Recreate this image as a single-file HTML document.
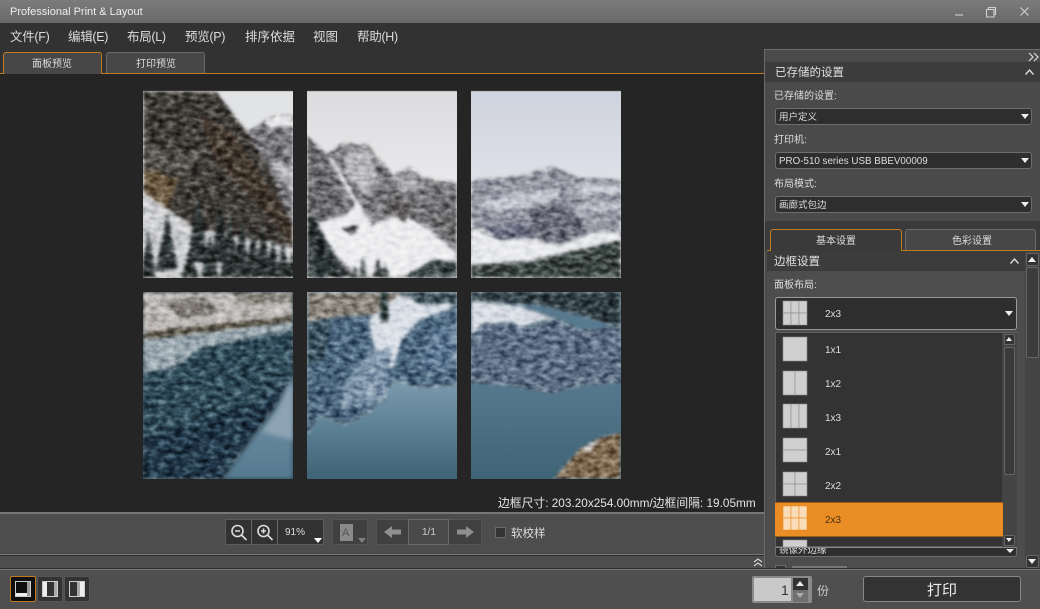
<!DOCTYPE html>
<html><head><meta charset="utf-8">
<style>
html,body{margin:0;padding:0;background:#333}
#r{position:relative;width:1040px;height:609px;overflow:hidden;background:#333;font-family:"Liberation Sans","Noto Sans CJK SC",sans-serif;color:#ddd}
#r div,#r span,#r svg{position:absolute;box-sizing:border-box}
.t{white-space:nowrap;line-height:16px;height:16px}
.m{font-size:12.500px;letter-spacing:-.3px;top:29px}
.cb{background:#2e2e2e;border:1px solid #6e6e6e;border-radius:3px}
.tri{width:0;height:0;border-left:4px solid transparent;border-right:4px solid transparent;border-top:5px solid #eee}
</style></head><body>
<div id="r">
<!-- title bar -->
<div style="left:0;top:0;width:1040px;height:23px;background:linear-gradient(#7b7b7b,#696969)"></div>
<span class="t" style="left:10px;top:4px;font-size:11px;color:#eee">Professional Print &amp; Layout</span>
<svg style="left:950px;top:4px" width="85" height="16" fill="none" stroke="#d0d0d0" stroke-width="1.100"><path d="M5 11h8"/><path d="M36.500 5.500h7.500v7.500h-7.500zM38.500 5.500v-2h7v7h-2"/><path d="M70.500 3.500l8 8M78.500 3.500l-8 8"/></svg>
<!-- menu -->
<div style="left:0;top:23px;width:1040px;height:51px;background:#323232"></div>
<span class="t m" style="left:10px">文件(F)</span>
<span class="t m" style="left:68px">编辑(E)</span>
<span class="t m" style="left:127px">布局(L)</span>
<span class="t m" style="left:185px">预览(P)</span>
<span class="t m" style="left:245px;letter-spacing:0">排序依据</span>
<span class="t m" style="left:313px;letter-spacing:0">视图</span>
<span class="t m" style="left:357px">帮助(H)</span>
<!-- tabs -->
<div style="left:0;top:73px;width:765px;height:1px;background:#c07a20"></div>
<div style="left:3px;top:52px;width:99px;height:22px;background:#474747;border:1px solid #c07a20;border-bottom:none;border-radius:3px 3px 0 0"></div>
<div style="left:106px;top:52px;width:99px;height:21px;background:#474747;border:1px solid #6a6a6a;border-bottom:none;border-radius:3px 3px 0 0"></div>
<span class="t" style="left:32px;top:57px;font-size:10px">面板预览</span>
<span class="t" style="left:136px;top:57px;font-size:10px">打印预览</span>
<!-- canvas -->
<div style="left:0;top:74px;width:764px;height:438px;background:#252525"></div>
<svg style="left:0;top:0" width="1040" height="609" viewBox="0 0 1040 609">
<defs>
<clipPath id="c1"><rect x="143" y="91" width="150" height="187"/></clipPath>
<clipPath id="c2"><rect x="307" y="91" width="150" height="187"/></clipPath>
<clipPath id="c3"><rect x="471" y="91" width="150" height="187"/></clipPath>
<clipPath id="c4"><rect x="143" y="292" width="150" height="187"/></clipPath>
<clipPath id="c5"><rect x="307" y="292" width="150" height="187"/></clipPath>
<clipPath id="c6"><rect x="471" y="292" width="150" height="187"/></clipPath>
<filter id="b" filterUnits="userSpaceOnUse" x="140" y="88" width="484" height="394"><feGaussianBlur stdDeviation="2.500"/></filter>
<filter id="tx" filterUnits="userSpaceOnUse" x="140" y="88" width="484" height="394" color-interpolation-filters="sRGB">
<feGaussianBlur in="SourceGraphic" stdDeviation="1.500" result="s"/>
<feTurbulence type="fractalNoise" baseFrequency=".12 .22" numOctaves="3" seed="3" result="t"/>
<feColorMatrix in="t" type="matrix" values="1.500 0 0 0 -.25  1.500 0 0 0 -.25  1.500 0 0 0 -.25  0 0 0 0 1" result="n"/>
<feBlend in="n" in2="s" mode="soft-light" result="bl"/>
<feComposite in="bl" in2="s" operator="in" result="c"/>
<feGaussianBlur in="c" stdDeviation=".4"/>
</filter>
<linearGradient id="sk2" x1="0" y1="0" x2="0" y2="1"><stop offset="0" stop-color="#dcdcde"/><stop offset=".5" stop-color="#e9e9eb"/></linearGradient>
<linearGradient id="sk3" x1="0" y1="0" x2="0" y2="1"><stop offset="0" stop-color="#cfd3df"/><stop offset=".5" stop-color="#dfe1e8"/></linearGradient>
<linearGradient id="w5" x1="0" y1="0" x2="0" y2="1"><stop offset=".4" stop-color="#86a2b6"/><stop offset=".7" stop-color="#5f8397"/><stop offset="1" stop-color="#3e6374"/></linearGradient>
<linearGradient id="w6" x1="0" y1="0" x2="0" y2="1"><stop offset=".45" stop-color="#587a90"/><stop offset="1" stop-color="#3e6476"/></linearGradient>
<linearGradient id="w4" x1="0" y1="0" x2="0" y2="1"><stop offset="0" stop-color="#7795aa"/><stop offset="1" stop-color="#557a8f"/></linearGradient>
</defs>
<!-- panel 1 -->
<g clip-path="url(#c1)">
<rect x="143" y="91" width="150" height="187" fill="#e2e3e5"/>
<g filter="url(#tx)">
<polygon points="143,91 216,91 247,132 293,195 293,250 143,250" fill="#3f3b36"/>
<polygon points="247,132 263,123 277,115 293,116 293,230 270,170" fill="#76757a"/>
<polygon points="263,122 277,115 293,116 293,126 272,128" fill="#e8e8ea"/>
<polygon points="268,160 293,165 293,195" fill="#bfbfc3"/>
<polygon points="200,115 232,132 293,225 293,247 262,208 215,160" fill="#44392f"/>
<polygon points="143,165 178,180 165,215 143,200" fill="#6b5a42"/>
<polygon points="143,140 175,155 205,150 190,172 143,170" fill="#55524d"/>
<polygon points="143,192 195,228 293,247 293,278 143,278" fill="#cfd0d2"/>
<path d="M198 193L209 262H187ZM148 230L156 278H140ZM167 213L178 270H156ZM220 203L229 262H211ZM230 210L240 278H220ZM242 220L251 278H233ZM253 223L261 278H245ZM263 220L271 278H255ZM273 237L281 278H265ZM283 243L291 278H275ZM210 235L219 278H201ZM190 250L199 278H181ZM293 250L300 278H286Z" fill="#2b3332"/>
</g></g>
<!-- panel 2 -->
<g clip-path="url(#c2)">
<rect x="307" y="91" width="150" height="187" fill="url(#sk2)"/>
<g filter="url(#tx)">
<polygon points="307,135 327,155 343,143 367,145 380,160 393,175 410,167 423,178 457,183 457,262 433,260 403,278 307,278" fill="#7a797c"/>
<polygon points="345,150 370,150 378,178 368,195 345,175" fill="#b9b9bc"/>
<polygon points="395,178 412,172 425,184 415,192 400,192" fill="#a8a8ac"/>
<polygon points="307,135 327,155 345,205 330,225 317,223 307,213" fill="#6a696c"/>
<polygon points="327,155 334,160 372,225 400,213 430,230 457,253 457,262 433,260 403,277 360,277 335,255 317,223 345,215 355,205" fill="#ededef"/>
<polygon points="342,228 360,225 352,235" fill="#4e4e52"/>
<polygon points="392,192 412,205 405,222 388,212" fill="#5d5a5a"/>
<polygon points="420,200 457,205 457,246 432,226" fill="#6c6b6d"/>
<polygon points="307,213 317,223 335,255 350,278 307,278" fill="#2f3838"/>
<polygon points="403,278 433,260 457,262 457,278" fill="#3a4646"/>
<path d="M363 255L367 278H359ZM378 258L383 278H373ZM385 262L389 278H381ZM355 264L358 278H352Z" fill="#384040"/>
</g></g>
<!-- panel 3 -->
<g clip-path="url(#c3)">
<rect x="471" y="91" width="150" height="187" fill="url(#sk3)"/>
<g filter="url(#tx)">
<polygon points="471,180 513,177 553,167 580,178 621,180 621,232 593,232 560,245 530,238 471,227" fill="#9496a2"/>
<polygon points="475,205 520,192 560,188 560,198 500,212" fill="#c3c6cf"/>
<polygon points="575,185 621,186 621,193 578,195" fill="#ccced6"/>
<polygon points="578,205 621,202 621,210 582,214" fill="#bcbec8"/>
<polygon points="480,228 530,222 540,240 500,240" fill="#6b6f82"/>
<polygon points="530,208 568,206 592,238 560,245 530,238" fill="#6a6c79"/>
<polygon points="471,227 500,240 530,238 560,245 593,232 621,232 621,240 527,262 471,265" fill="#e9eaed"/>
<polygon points="471,265 527,262 621,240 621,278 471,278" fill="#39433f"/>
</g></g>
<!-- panel 4 -->
<g clip-path="url(#c4)">
<rect x="143" y="292" width="150" height="187" fill="#29414f"/>
<g filter="url(#tx)">
<polygon points="143,292 293,292 293,318 143,335" fill="#bdbab7"/>
<polygon points="165,300 205,298 220,312 180,318" fill="#7b7670"/>
<polygon points="230,292 293,292 293,302 245,305" fill="#8b8880"/>
<polygon points="143,332 293,316 293,322 143,340" fill="#5a5448"/>
<polygon points="143,340 293,322 293,330 240,340 200,348 175,368 143,372" fill="#9eabb3"/>
<polygon points="175,368 200,348 293,330 293,378 255,430 223,479 143,479 143,372" fill="#2f4b59"/>
<polygon points="200,420 255,405 293,378 253,438 223,479 143,479 143,440" fill="#21384a"/>
</g>
<polygon points="293,378 293,479 223,479 253,438 275,410" fill="url(#w4)" filter="url(#b)"/>
<polygon points="293,378 293,440 262,432 278,410" fill="#8ea3b3" filter="url(#b)"/>
</g>
<!-- panel 5 -->
<g clip-path="url(#c5)">
<rect x="307" y="292" width="150" height="187" fill="url(#w5)"/>
<g filter="url(#tx)">
<polygon points="307,292 400,292 413,306 390,314 345,316 307,322" fill="#8b857c"/>
<polygon points="307,322 345,316 390,316 420,318 457,305 457,385 420,388 395,380 370,412 345,425 320,415 307,435" fill="#4a667e"/>
<polygon points="307,322 330,320 325,360 307,365" fill="#3d5663"/>
<polygon points="368,320 398,296 440,298 457,306 420,320 402,340 392,370 375,350" fill="#d9dfe6"/>
<polygon points="400,292 457,292 457,303 420,304" fill="#3b4c57"/>
<polygon points="345,385 370,350 392,350 385,400 340,410" fill="#8298ad"/>
<polygon points="430,330 457,320 457,372 420,372" fill="#5e7993"/>
<polygon points="380,292 388,292 388,322 380,322" fill="#2c3a3a"/>
</g></g>
<!-- panel 6 -->
<g clip-path="url(#c6)">
<rect x="471" y="292" width="150" height="187" fill="url(#w6)"/>
<g filter="url(#tx)">
<polygon points="471,292 621,292 621,328 580,315 540,305 471,300" fill="#2f3d43"/>
<polygon points="471,300 520,306 555,318 545,320 520,328 505,322 480,325 471,340" fill="#d8dde4"/>
<polygon points="471,335 485,325 505,322 530,328 555,318 580,330 621,328 621,382 580,385 550,393 510,385 471,382" fill="#5c6e85"/>
<polygon points="553,479 580,448 599,438 621,432 621,479" fill="#7f6a50"/>
<polygon points="580,448 600,440 590,452" fill="#d5d5d5"/>
</g></g>
<g fill="none" stroke="#6e6e6e" stroke-width="1" opacity=".5"><path d="M143 91h150M307 91h150M471 91h150"/></g>
</svg>
<span class="t" style="left:498px;top:495px;font-size:11.800px;color:#e4e4e4">边框尺寸: 203.20x254.00mm/边框间隔: 19.05mm</span>
<!-- toolbar -->
<div style="left:0;top:512px;width:764px;height:42px;background:#4d4d4d;border-top:2px solid #777"></div>
<div style="left:0;top:554px;width:764px;height:2px;background:linear-gradient(#777 50%,#2e2e2e 50%)"></div>
<div style="left:0;top:556px;width:764px;height:12px;background:#4d4d4d"></div>
<div style="left:0;top:568px;width:1040px;height:2px;background:linear-gradient(#2e2e2e 50%,#7a7a7a 50%)"></div>
<div style="left:0;top:570px;width:1040px;height:39px;background:#4f4f4f"></div>
<svg style="left:752px;top:556px" width="12" height="12" fill="none" stroke="#ddd" stroke-width="1.100"><path d="M2 6l4-3 4 3M2 10l4-3 4 3"/></svg>
<!-- zoom group -->
<div style="left:225px;top:519px;width:99px;height:26px;background:#323232;border:1px solid #5c5c5c;border-radius:2px"></div>
<div style="left:251px;top:519px;width:1px;height:26px;background:#666"></div>
<div style="left:277px;top:519px;width:1px;height:26px;background:#666"></div>
<svg style="left:225px;top:519px" width="52" height="26" fill="none" stroke="#ddd" stroke-width="1.600"><circle cx="12.500" cy="12" r="5.500"/><path d="M16.500 16l5 5M10 12h5"/><circle cx="38.500" cy="12" r="5.500"/><path d="M42.500 16l5 5M36 12h5M38.500 9.500v5"/></svg>
<span class="t" style="left:285px;top:525px;font-size:10px">91%</span>
<div class="tri" style="left:314px;top:538px;border-top-color:#fff"></div>
<div style="left:332px;top:519px;width:36px;height:26px;background:#404040;border:1px solid #555;border-radius:2px"></div>
<div style="left:340px;top:524px;width:13px;height:17px;background:#8a8a8a"></div>
<span class="t" style="left:342px;top:525px;font-size:11px;color:#555">A</span>
<div class="tri" style="left:358px;top:538px;border-top-color:#7e7e7e"></div>
<div style="left:376px;top:519px;width:106px;height:26px;background:#404040;border:1px solid #555;border-radius:2px"></div>
<div style="left:408px;top:519px;width:41px;height:26px;background:#4a4a4a;border:1px solid #6a6a6a"></div>
<span class="t" style="left:422px;top:525px;font-size:10px;color:#ccc">1/1</span>
<svg style="left:384px;top:524px" width="90" height="16" fill="#8f8f8f"><path d="M0 8l8-6v3.500h9v5H8V14zM90 8l-8-6v3.500h-9v5h9V14z"/></svg>
<div style="left:495px;top:527px;width:11px;height:11px;background:#333;border:1px solid #6a6a6a"></div>
<span class="t" style="left:511px;top:526px;font-size:11.500px;color:#ddd">软校样</span>
<!-- bottom-left -->
<div style="left:10px;top:576px;width:26px;height:26px;background:#0f0f0f;border:1px solid #c07a20;border-radius:2px"></div>
<div style="left:37px;top:576px;width:26px;height:26px;background:#333;border:1px solid #555;border-radius:2px"></div>
<div style="left:64px;top:576px;width:26px;height:26px;background:#333;border:1px solid #555;border-radius:2px"></div>
<svg style="left:10px;top:576px" width="80" height="26" fill="none"><rect x="5.500" y="5.500" width="15" height="15" stroke="#ccc"/><rect x="6" y="17" width="11" height="3" fill="#eee"/><rect x="17" y="6" width="3" height="14" fill="#999"/><rect x="32.500" y="5.500" width="15" height="15" stroke="#ccc"/><rect x="33" y="6" width="4" height="14" fill="#eee"/><rect x="44" y="6" width="3" height="14" fill="#aaa"/><rect x="59.500" y="5.500" width="15" height="15" stroke="#ccc"/><rect x="70" y="6" width="4" height="14" fill="#eee"/><rect x="67" y="6" width="3" height="14" fill="#aaa"/></svg>
<!-- copies / print -->
<div style="left:752px;top:576px;width:60px;height:27px;background:#8a8a8a;border-radius:2px"></div>
<div style="left:754px;top:578px;width:37px;height:23px;background:#c9c9c9"></div>
<span class="t" style="left:781px;top:582px;font-size:14px;color:#333">1</span>
<div style="left:793px;top:578px;width:15px;height:12px;background:#333"></div>
<div style="left:793px;top:590px;width:15px;height:12px;background:#707070"></div>
<div class="tri" style="left:796px;top:581px;border-top:none;border-bottom:5px solid #eee"></div>
<div class="tri" style="left:796px;top:593px;border-top-color:#aaa"></div>
<span class="t" style="left:817px;top:583px;font-size:12px;color:#ccc">份</span>
<div style="left:863px;top:576px;width:158px;height:26px;background:#333;border:1px solid #888;border-radius:3px"></div>
<span class="t" style="left:927px;top:583px;font-size:15px;color:#eee">打印</span>
<!-- right panel -->
<div style="left:764px;top:49px;width:276px;height:519px;background:#4a4a4a;border:1px solid #6c6c6c;border-right:none;border-bottom:none"></div>
<svg style="left:1027px;top:51px" width="13" height="12" fill="none" stroke="#ddd" stroke-width="1.200"><path d="M2 2l4 4-4 4M7 2l4 4-4 4"/></svg>
<div style="left:765px;top:62px;width:275px;height:20px;background:#3c3c3c"></div>
<span class="t" style="left:775px;top:65px;font-size:11.500px;color:#e0e0e0">已存储的设置</span>
<svg style="left:1024px;top:68px" width="11" height="8" fill="none" stroke="#ddd" stroke-width="1.400"><path d="M1.500 6.500L5.500 2l4 4.500"/></svg>
<span class="t" style="left:774px;top:89px;font-size:10px">已存储的设置:</span>
<div class="cb" style="left:775px;top:108px;width:257px;height:17px"></div>
<span class="t" style="left:779px;top:110px;font-size:9.500px">用户定义</span>
<div class="tri" style="left:1021px;top:114px"></div>
<span class="t" style="left:774px;top:133px;font-size:10px">打印机:</span>
<div class="cb" style="left:775px;top:152px;width:257px;height:17px"></div>
<span class="t" style="left:779px;top:154px;font-size:9.800px">PRO-510 series USB BBEV00009</span>
<div class="tri" style="left:1021px;top:158px"></div>
<span class="t" style="left:774px;top:177px;font-size:10px">布局模式:</span>
<div class="cb" style="left:775px;top:196px;width:257px;height:17px"></div>
<span class="t" style="left:779px;top:198px;font-size:9.500px">画廊式包边</span>
<div class="tri" style="left:1021px;top:202px"></div>
<div style="left:765px;top:221px;width:275px;height:30px;background:#3a3a3a"></div>
<div style="left:767px;top:250px;width:273px;height:1px;background:#c07a20"></div>
<div style="left:770px;top:229px;width:132px;height:22px;background:#3a3a3a;border:1px solid #c07a20;border-bottom:none;border-radius:3px 3px 0 0"></div>
<div style="left:905px;top:229px;width:131px;height:21px;background:#474747;border:1px solid #6a6a6a;border-bottom:none;border-radius:3px 3px 0 0"></div>
<span class="t" style="left:816px;top:234px;font-size:10px">基本设置</span>
<span class="t" style="left:952px;top:234px;font-size:10px">色彩设置</span>
<div style="left:767px;top:251px;width:258px;height:20px;background:#3c3c3c"></div>
<div style="left:767px;top:271px;width:258px;height:297px;background:#4d4d4d"></div>
<div style="left:1025px;top:251px;width:15px;height:317px;background:#444"></div>
<span class="t" style="left:774px;top:254px;font-size:11.500px;color:#e0e0e0">边框设置</span>
<svg style="left:1009px;top:257px" width="11" height="8" fill="none" stroke="#ddd" stroke-width="1.400"><path d="M1.500 6.500L5.500 2l4 4.500"/></svg>
<span class="t" style="left:774px;top:278px;font-size:10px">面板布局:</span>
<div style="left:1026px;top:253px;width:13px;height:13px;background:#333;border:1px solid #666;border-radius:2px"></div>
<div class="tri" style="left:1028px;top:257px;border-top:none;border-bottom:5px solid #eee"></div>
<div style="left:1026px;top:267px;width:13px;height:91px;background:#3c3c3c;border:1px solid #666;border-radius:2px"></div>
<div style="left:1026px;top:555px;width:13px;height:13px;background:#333;border:1px solid #666;border-radius:2px"></div>
<div class="tri" style="left:1028px;top:559px"></div>
<!-- combobox -->
<div style="left:775px;top:297px;width:242px;height:33px;background:#2e2e2e;border:1px solid #9a9a9a;border-radius:3px"></div>
<span class="t" style="left:825px;top:307px;font-size:10px">2x3</span>
<div class="tri" style="left:1005px;top:311px"></div>
<!-- dropdown -->
<div style="left:775px;top:332px;width:242px;height:215px;background:#333;border:1px solid #5e5e5e"></div>
<div style="left:1002px;top:333px;width:15px;height:214px;background:#444"></div>
<div style="left:1004px;top:334px;width:11px;height:11px;background:#333;border:1px solid #666"></div>
<div class="tri" style="left:1006px;top:337px;border-left-width:3.500px;border-right-width:3.500px;border-top:none;border-bottom:4px solid #eee"></div>
<div style="left:1004px;top:347px;width:11px;height:128px;background:#3a3a3a;border:1px solid #666;border-radius:2px"></div>
<div style="left:1004px;top:535px;width:11px;height:11px;background:#333;border:1px solid #666"></div>
<div class="tri" style="left:1006px;top:538px;border-left-width:3.500px;border-right-width:3.500px;border-top-width:4px"></div>
<div style="left:775px;top:502px;width:228px;height:35px;background:#e98d24;border-top:1px solid #9a5d17;border-bottom:1px solid #9a5d17"></div>
<svg style="left:775px;top:297px" width="40" height="260" fill="#cfcfcf" stroke="#8a8a8a" stroke-width=".6">
<rect x="8" y="4" width="8" height="12"/><rect x="16" y="4" width="8" height="12"/><rect x="24" y="4" width="8" height="12"/><rect x="8" y="16" width="8" height="12"/><rect x="16" y="16" width="8" height="12"/><rect x="24" y="16" width="8" height="12"/>
<rect x="8" y="40" width="24" height="24"/>
<rect x="8" y="74" width="12" height="24"/><rect x="20" y="74" width="12" height="24"/>
<rect x="8" y="107" width="8" height="24"/><rect x="16" y="107" width="8" height="24"/><rect x="24" y="107" width="8" height="24"/>
<rect x="8" y="141" width="24" height="12"/><rect x="8" y="153" width="24" height="12"/>
<rect x="8" y="175" width="12" height="12"/><rect x="20" y="175" width="12" height="12"/><rect x="8" y="187" width="12" height="12"/><rect x="20" y="187" width="12" height="12"/>
<g fill="#f9dcb8" stroke="#e98d24"><rect x="8" y="209" width="8" height="12"/><rect x="16" y="209" width="8" height="12"/><rect x="24" y="209" width="8" height="12"/><rect x="8" y="221" width="8" height="12"/><rect x="16" y="221" width="8" height="12"/><rect x="24" y="221" width="8" height="12"/></g>
<rect x="8" y="243" width="24" height="7"/>
</svg>
<span class="t" style="left:825px;top:343px;font-size:10px">1x1</span>
<span class="t" style="left:825px;top:377px;font-size:10px">1x2</span>
<span class="t" style="left:825px;top:411px;font-size:10px">1x3</span>
<span class="t" style="left:825px;top:445px;font-size:10px">2x1</span>
<span class="t" style="left:825px;top:479px;font-size:10px">2x2</span>
<span class="t" style="left:825px;top:513px;font-size:10px;color:#4a3418">2x3</span>
<!-- under dropdown -->
<div style="left:775px;top:547px;width:242px;height:10px;background:#2e2e2e;border:1px solid #6e6e6e;border-top-color:#888;border-radius:0 0 3px 3px;overflow:hidden"></div>
<span class="t" style="left:779px;top:544px;font-size:9.500px;height:12px;overflow:hidden;line-height:14px;clip-path:inset(4px 0 0 0)">镜像外边缘</span>
<div class="tri" style="left:1006px;top:549px;border-top-width:4px"></div>
<div style="left:775px;top:565px;width:11px;height:3px;background:#333;border:1px solid #6a6a6a;border-bottom:none"></div>
<div style="left:792px;top:566px;width:55px;height:2px;background:#888;opacity:.7"></div>
</div>
</body></html>
